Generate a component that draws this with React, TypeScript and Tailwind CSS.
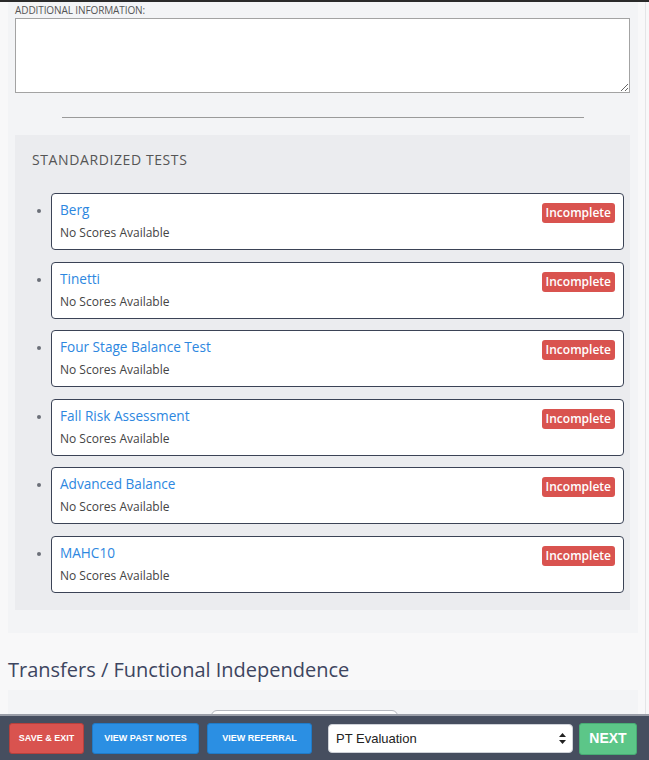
import React from 'react';

const tests = [
  'Berg',
  'Tinetti',
  'Four Stage Balance Test',
  'Fall Risk Assessment',
  'Advanced Balance',
  'MAHC10',
];

function TestCard({ name }: { name: string }) {
  return (
    <li className="flex items-start">
      <span className="mt-[16px] h-[4px] w-[4px] shrink-0 rounded-full bg-[#6b6f78]" />
      <div className="ml-[10px] flex h-[57px] flex-1 justify-between rounded-[4px] border border-[#3b4356] bg-white pl-[8px] pr-[8px] pt-[6px]">
        <div>
          <a href="#" className="block text-[13.6px] leading-[20px] text-[#2d87df]">
            {name}
          </a>
          <div className="mt-[4px] text-[12px] leading-[18px] text-[#444]">No Scores Available</div>
        </div>
        <span className="mt-[3px] h-[20px] rounded-[3px] bg-[#d9534f] px-[4px] text-[12px] font-semibold leading-[20px] text-white">
          Incomplete
        </span>
      </div>
    </li>
  );
}

export default function App() {
  return (
    <div
      className="relative h-[760px] w-[649px] overflow-hidden bg-[#f8f8f9]"
      style={{ fontFamily: '"Open Sans", "Liberation Sans", sans-serif' }}
    >
      <div className="h-[2px] bg-[#2a2a2a]" />
      <div className="w-[646px] border-r border-[#e4e5e7]">
        {/* additional info panel */}
        <div className="ml-[8px] w-[630px] bg-[#f3f4f6] pb-[23px] pl-[7px] pr-[8px] pt-[1px]">
          <div className="text-[10px] leading-[14px] tracking-[-0.1px] text-[#555]">ADDITIONAL INFORMATION:</div>
          <textarea className="mt-[1px] block h-[75px] w-full border border-[#a3a3a3] bg-white" />
          <div className="mx-auto mt-[24px] h-px w-[522px] bg-[#9a9a9a]" />

          {/* standardized tests */}
          <div className="mt-[17px] bg-[#ebecef] pb-[17px] pr-[6px] pt-[15px]">
            <h3 className="pl-[17px] text-[14px] leading-[20px] tracking-[0.6px] text-[#555]">STANDARDIZED TESTS</h3>
            <ul className="mt-[23px] flex flex-col gap-[11.6px] pl-[22px]">
              {tests.map((t) => (
                <TestCard key={t} name={t} />
              ))}
            </ul>
          </div>
        </div>

        <h2 className="ml-[8px] mt-[24px] text-[20px] leading-[26px] text-[#3d4560]">Transfers / Functional Independence</h2>

        <div className="ml-[8px] mt-[7px] h-[100px] w-[630px] bg-[#f3f4f6] pt-[20px]">
          <div className="ml-[203px] h-[40px] w-[187px] rounded-t-[6px] border border-[#b5b8bf] bg-white" />
        </div>
      </div>

      {/* bottom action bar */}
      <div
        className="absolute bottom-0 left-0 right-0 flex h-[46px] items-center border-t-2 border-[#9a9ea8] bg-[#464e5f] pl-[9px] pt-[1px]"
        style={{ fontFamily: '"Liberation Sans", Arial, sans-serif' }}
      >
        <button className="h-[31px] w-[75px] rounded-[3px] border border-[#b8403c] bg-[#d9534f] text-[9px] font-bold text-white">
          SAVE &amp; EXIT
        </button>
        <button className="ml-[8px] h-[31px] w-[107px] rounded-[3px] border border-[#1f7bc8] bg-[#2b8fe3] text-[9px] font-bold text-white">
          VIEW PAST NOTES
        </button>
        <button className="ml-[8px] h-[31px] w-[105px] rounded-[3px] border border-[#1f7bc8] bg-[#2b8fe3] text-[9px] font-bold text-white">
          VIEW REFERRAL
        </button>
        <div className="ml-[16px] flex h-[29px] w-[245px] items-center justify-between rounded-[4px] border border-[#cfd2d8] bg-white pl-[7px] pr-[6px] text-[13px] text-[#222]">
          <span>PT Evaluation</span>
          <svg width="7" height="11" viewBox="0 0 7 11">
            <path d="M3.5 0 L7 4 L0 4 Z" fill="#222" />
            <path d="M3.5 11 L7 7 L0 7 Z" fill="#222" />
          </svg>
        </div>
        <button className="ml-[6px] h-[32px] w-[58px] rounded-[3px] border border-[#47ad74] bg-[#5cc688] text-[14px] font-bold text-white">
          NEXT
        </button>
      </div>
    </div>
  );
}
